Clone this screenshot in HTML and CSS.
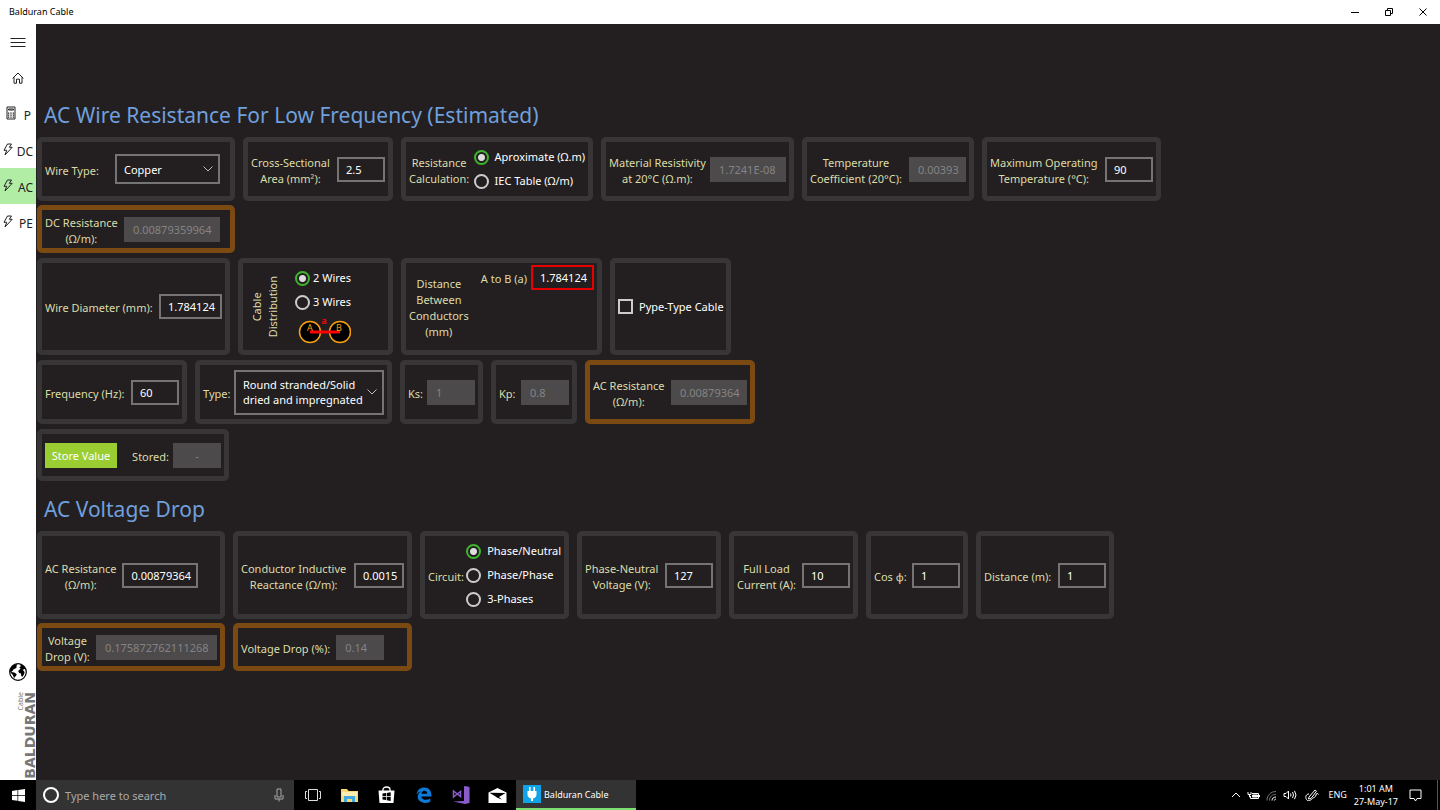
FILE: index.html
```html
<!DOCTYPE html>
<html lang="en">
  <head>
    <meta charset="UTF-8" />
    <meta name="viewport" content="width=device-width, initial-scale=1.0" />
    <title>Balduran Cable</title>
    <link rel="stylesheet" href="styles.css">
  </head>
  <body>
    <header class="titlebar">
      <span class="title">Balduran Cable</span>
      <div class="window-buttons">
        <button aria-label="Minimize"><svg width="10" height="10" viewBox="0 0 10 10"><path d="M1 5.5h8" /></svg></button>
        <button aria-label="Restore"><svg width="10" height="10" viewBox="0 0 10 10"><path d="M1.5 3.5h5v5h-5zM3.5 3.5v-2h5v5h-2" /></svg></button>
        <button aria-label="Close"><svg width="10" height="10" viewBox="0 0 10 10"><path d="M1.5 1.5l7 7M8.5 1.5l-7 7" /></svg></button>
      </div>
    </header>

    <div class="app">
      <nav class="sidebar">
        <button class="nav-item" aria-label="Menu"><svg width="16" height="10" viewBox="0 0 16 10"><path d="M.5 1.500h15M.5 5.500h15M.5 9.500h15" /></svg></button>
        <a class="nav-item" href="#" aria-label="Home"><svg width="12" height="12" viewBox="0 0 12 12"><path d="M.6 6.4L6 1l5.400 5.400M2 5.200v6h2.500V7.200h3v4H10v-6" /></svg></a>
        <a class="nav-item with-text first" href="#">
          <svg width="10" height="14" viewBox="0 0 10 14"><path d="M1 1h8v12H1zM2.500 3h5v1h-5z" /><path d="M2.600 6.500v5.500M5 6.500v5.500M7.400 6.500v5.500" stroke-dasharray="1.200 .8" stroke-width="1.300" /></svg>
          <span>P</span>
        </a>
        <a class="nav-item with-text" href="#">
          <svg width="10" height="13" viewBox="0 0 10 13"><path d="M4.500 1h4L6.300 4.300h2.900L2 12l1.700-4.700H1z" /></svg>
          <span>DC</span>
        </a>
        <a class="nav-item with-text active" href="#">
          <svg width="10" height="13" viewBox="0 0 10 13"><path d="M4.500 1h4L6.300 4.300h2.900L2 12l1.700-4.700H1z" /></svg>
          <span>AC</span>
        </a>
        <a class="nav-item with-text" href="#">
          <svg width="10" height="13" viewBox="0 0 10 13"><path d="M4.500 1h4L6.300 4.300h2.900L2 12l1.700-4.700H1z" /></svg>
          <span>PE</span>
        </a>
        <div class="sidebar-bottom">
          <svg class="globe" width="18" height="18" viewBox="0 0 18 18">
            <circle cx="9" cy="9" r="8.300" fill="#fff" stroke="#000" stroke-width="1.200" />
            <path d="M1.500 5.500C3 2.500 5 1.200 7.500.9l1 1.100-1.500.9 1 1-2 1.900-1.500.4-.6 1.500-1.500.2 1 1.300 1.800.2 2.500 1.600-.7 2-1.400 1-.3 1.700C5 15.500 4.500 13 3.500 11.500 2.500 10.500 1.300 9.500 1 8z" />
            <path d="M10.800.9c3 .6 5.300 2.600 6.200 5.600l-1.900-.4-1.200.9 1.700 1.900-.6 2.600-1.600 2.300-1.200-.7-.2-2.600-1.900-.6-.9-2 1.500-1.500 1-.8-1.500-1 1.600-1.400z" />
          </svg>
          <div class="logo">
            <span class="logo-small">Cable</span>
            <span class="logo-name">BALDURAN</span>
          </div>
        </div>
      </nav>

      <main>
        <h1>AC Wire Resistance For Low Frequency (Estimated)</h1>
        <div class="rows">
          <div class="row resistance-row">
            <div class="panel spread">
              <label for="wireType">Wire Type:</label>
              <div class="select-box">
                <select id="wireType">
                  <option>Copper</option>
                  <option>Aluminum</option>
                </select>
                <svg width="10" height="6" viewBox="0 0 10 6"><path d="M.5.5L5 5 9.500.5" /></svg>
              </div>
            </div>
            <div class="panel">
              <label for="area">Cross-Sectional<br />Area (mm²):</label>
              <input type="text" id="area" value="2.5" />
            </div>
            <fieldset class="panel">
              <div class="label" id="calcLabel">Resistance<br />Calculation:</div>
              <div class="radios" role="radiogroup" aria-labelledby="calcLabel">
                <label class="radio"><input type="radio" name="calc" checked />Aproximate (Ω.m)</label>
                <label class="radio"><input type="radio" name="calc" />IEC Table (Ω/m)</label>
              </div>
            </fieldset>
            <div class="panel">
              <label for="resistivity">Material Resistivity<br />at 20°C (Ω.m):</label>
              <input type="text" id="resistivity" class="medium" value="1.7241E-08" disabled />
            </div>
            <div class="panel">
              <label for="coefficient">Temperature<br />Coefficient (20°C):</label>
              <input type="text" id="coefficient" class="short" value="0.00393" disabled />
            </div>
            <div class="panel">
              <label for="maxTemp">Maximum Operating<br />Temperature (°C):</label>
              <input type="text" id="maxTemp" value="90" />
            </div>
            <div class="panel result spread">
              <label for="dcResistance">DC Resistance<br />(Ω/m):</label>
              <input type="text" id="dcResistance" class="long" value="0.00879359964" disabled />
            </div>
          </div>

          <div class="row wires-row">
            <div class="panel">
              <label for="diameter">Wire Diameter (mm):</label>
              <input type="text" id="diameter" class="number" value="1.784124" />
            </div>
            <fieldset class="panel distribution">
              <div class="label vertical" id="distLabel">Cable<br />Distribution</div>
              <div class="radios" role="radiogroup" aria-labelledby="distLabel">
                <label class="radio tight"><input type="radio" name="wires" checked />2 Wires</label>
                <label class="radio tight"><input type="radio" name="wires" />3 Wires</label>
                <svg class="diagram" width="56" height="33" viewBox="0 0 56 33">
                  <circle cx="15" cy="18" r="10.500" />
                  <circle cx="45" cy="18" r="10.500" />
                  <path d="M15 18h30" />
                  <text x="15" y="17" class="wire-name">A</text>
                  <text x="44" y="17" class="wire-name">B</text>
                  <text x="29" y="10" class="gap-name">a</text>
                </svg>
              </div>
            </fieldset>
            <div class="panel top">
              <div class="label">Distance<br />Between<br />Conductors<br />(mm)</div>
              <div class="pair">
                <label for="aToB">A to B (a)</label>
                <input type="text" id="aToB" class="number invalid" value="1.784124" />
              </div>
            </div>
            <div class="panel">
              <label class="check"><input type="checkbox" />Pype-Type Cable</label>
            </div>
          </div>

          <div class="row frequency-row">
            <div class="panel">
              <label for="frequency">Frequency (Hz):</label>
              <input type="text" id="frequency" value="60" />
            </div>
            <div class="panel">
              <label for="cableType">Type:</label>
              <div class="select-box cable-type">
                <select id="cableType">
                  <option>Round stranded/Solid dried and impregnated</option>
                </select>
                <svg width="10" height="6" viewBox="0 0 10 6"><path d="M.5.5L5 5 9.500.5" /></svg>
              </div>
            </div>
            <div class="panel">
              <label for="ks">Ks:</label>
              <input type="text" id="ks" value="1" disabled />
            </div>
            <div class="panel">
              <label for="kp">Kp:</label>
              <input type="text" id="kp" value="0.8" disabled />
            </div>
            <div class="panel result">
              <label for="acResult">AC Resistance<br />(Ω/m):</label>
              <input type="text" id="acResult" class="medium" value="0.00879364" disabled />
            </div>
          </div>

          <div class="row store-row">
            <div class="panel">
              <button class="store">Store Value</button>
              <div class="pair">
                <label for="stored">Stored:</label>
                <input type="text" id="stored" class="center" value="-" disabled />
              </div>
            </div>
          </div>
        </div>

        <h1>AC Voltage Drop</h1>
        <div class="rows">
          <div class="row drop-row">
            <div class="panel start">
              <label for="acResistance">AC Resistance<br />(Ω/m):</label>
              <input type="text" id="acResistance" class="medium" value="0.00879364" />
            </div>
            <div class="panel">
              <label for="reactance">Conductor Inductive<br />Reactance (Ω/m):</label>
              <input type="text" id="reactance" class="reactance" value="0.0015" />
            </div>
            <fieldset class="panel">
              <div class="label" id="circuitLabel">Circuit:</div>
              <div class="radios" role="radiogroup" aria-labelledby="circuitLabel">
                <label class="radio"><input type="radio" name="circuit" checked />Phase/Neutral</label>
                <label class="radio"><input type="radio" name="circuit" />Phase/Phase</label>
                <label class="radio"><input type="radio" name="circuit" />3-Phases</label>
              </div>
            </fieldset>
            <div class="panel">
              <label for="voltage">Phase-Neutral<br />Voltage (V):</label>
              <input type="text" id="voltage" value="127" />
            </div>
            <div class="panel">
              <label for="current">Full Load<br />Current (A):</label>
              <input type="text" id="current" value="10" />
            </div>
            <div class="panel">
              <label for="cos">Cos ϕ:</label>
              <input type="text" id="cos" value="1" />
            </div>
            <div class="panel">
              <label for="distance">Distance (m):</label>
              <input type="text" id="distance" value="1" />
            </div>
            <div class="panel result">
              <label for="dropV">Voltage<br />Drop (V):</label>
              <input type="text" id="dropV" class="longest" value="0.175872762111268" disabled />
            </div>
            <div class="panel result start">
              <label for="dropPercent">Voltage Drop (%):</label>
              <input type="text" id="dropPercent" value="0.14" disabled />
            </div>
          </div>
        </div>
      </main>
    </div>

    <footer class="taskbar">
      <button class="start-button" aria-label="Start"><svg width="13" height="13" viewBox="0 0 13 13"><path fill="#fff" d="M0 1.900l5.500-.8v5H0zM6.200 1L13 0v6.100H6.200zM0 6.800h5.500v5L0 11.100zM6.200 6.800H13V13l-6.800-1z" /></svg></button>
      <div class="search">
        <svg width="18" height="18" viewBox="0 0 18 18"><circle cx="9" cy="9" r="7" fill="none" stroke="#fff" stroke-width="2" /></svg>
        <input type="text" aria-label="Search" placeholder="Type here to search" />
        <svg width="10" height="14" viewBox="0 0 10 14"><path d="M3 1h4v8H3zM1 7v4h8V7M5 11v2.500" fill="none" stroke="#aaa" /></svg>
      </div>
      <button class="task" aria-label="Task View"><svg width="16" height="12" viewBox="0 0 16 12"><path d="M3.500.5h9v11h-9zM2 2.500H.5v7H2M14 2.500h1.500v7H14" fill="none" stroke="#ddd" /></svg></button>
      <button class="task" aria-label="File Explorer"><svg width="17" height="15" viewBox="0 0 17 15"><path fill="#f8d775" d="M0 1h6l1.500 2H17v11H0z" /><path fill="#fdeeb0" d="M1 4h15v4H1z" /><path fill="#3fa9e0" d="M3 8h11v6h-3v-3H6v3H3z" /></svg></button>
      <button class="task" aria-label="Store"><svg width="17" height="18" viewBox="0 0 17 18"><path d="M5 5V3.500C5 2 6.500 1 8.500 1S12 2 12 3.500V5" fill="none" stroke="#fff" stroke-width="1.300" /><path fill="#fff" d="M.5 4.500h16L15.500 17h-14z" /><path fill="#000" d="M4.500 7.500L8 7v3.200H4.500zM8.700 6.900l4-.6v3.900h-4zM4.500 10.900H8V14l-3.500-.5zM8.700 10.900h4V15l-4-.7z" /></svg></button>
      <button class="task" aria-label="Edge"><svg width="16" height="16" viewBox="0 0 16 16"><path fill="#0c7ad8" d="M.5 7.500C1.300 3 4.200.5 8.200.5c4.600 0 7.200 3.200 7.200 7.200v1.800H5.300c.3 2.500 2.300 3.300 4.500 3.300 1.700 0 3.100-.4 4.500-1.200v3.100c-1.400.8-3.200 1.200-5.100 1.200-4.300 0-7.500-2.400-7.500-6.300 0-2.300 1.400-4.300 3.600-5.400C3 4.800 1.500 5.800.5 7.500zM5.400 6.800h5.800c0-1.900-1-3.100-2.800-3.100-1.700 0-2.700 1.300-3 3.100z" /></svg></button>
      <button class="task" aria-label="Visual Studio"><svg width="18" height="18" viewBox="0 0 18 18"><path fill="#8a5cc9" d="M12 .5l1-.5 4.500 1v16L13 18 1 15.500l11-.5z" /><path d="M1.500 5v6l7-5.500v5z" fill="none" stroke="#8a5cc9" stroke-width="1.500" /></svg></button>
      <button class="task" aria-label="Mail"><svg width="19" height="15" viewBox="0 0 19 15"><path fill="#fff" d="M.5 4.500L9.500 0l9 4.500V15H.5z" /><path fill="#000" d="M1.500 4.800l16 .2-6.500 4 3 2.800-5-2.300z" /></svg></button>
      <button class="task-app">
        <svg width="18" height="18" viewBox="0 0 18 18"><path fill="#10a5e8" d="M0 0h18v18H0z" /><path fill="#fff" d="M6 2h1.600v4h2.800V2H12v4h1.500v3.500c0 2-1.300 3.500-3.500 4V16H8v-2.500c-2.200-.5-3.500-2-3.500-4V6H6z" /></svg>
        Balduran Cable
      </button>
      <div class="tray">
        <svg width="10" height="6" viewBox="0 0 10 6"><path d="M1 5l4-4 4 4" /></svg>
        <svg width="13" height="9" viewBox="0 0 13 9"><path d="M5 2.500h6.500v5h-8V5M12.500 4v2M1 1v2.500h3V1M2.500 3.500V6h1" /><path d="M5.500 4h5v2h-5z" class="charge" /></svg>
        <svg width="11" height="11" viewBox="0 0 11 11"><path class="dim" d="M1 10.500C1 5 5 1.500 10 1.500M3.500 10.500C3.500 7 6 4.300 10 4.300" /><path d="M6 10.500c0-2 1.500-3.500 4-3.500M8.300 10.500c0-.8.700-1.300 1.700-1.300" /></svg>
        <svg width="14" height="10" viewBox="0 0 14 10"><path d="M1 3.500h2l2.500-2.500v8L3 6.500H1zM7.500 3.500q1 1.500 0 3M9.500 2q2 3 0 6M11.500.8q3 4.200 0 8.400" /></svg>
        <svg class="pen" width="14" height="12" viewBox="0 0 14 12"><path d="M4 8l6-7 1.500 1.200L6 9.500 3.500 10zM4 5C1 5 0 8 1.500 10.500S6 11 7.500 9.500 11 8 11 6s2-2 2.500-.5" /></svg>
        <span class="lang">ENG</span>
        <div class="clock">1:01 AM<br />27-May-17</div>
        <svg width="13" height="13" viewBox="0 0 13 13"><path d="M1 1h11v8.500H8L6.500 12 5 9.500H1z" /></svg>
        <span class="show-desktop"></span>
      </div>
    </footer>
  </body>
</html>
```

FILE: styles.css
```css
* {
  margin: 0;
  padding: 0;
  box-sizing: border-box;
  font-family: "Noto Sans", "Open Sans", sans-serif;
}

body {
  display: flex;
  flex-direction: column;
  height: 100vh;
  overflow: hidden;
  background: #231f20;
  font-size: 11px;
  line-height: 16px;
}

button {
  border: none;
  background: none;
}

svg {
  flex: none;
}

/* Window title bar */
.titlebar {
  display: flex;
  justify-content: space-between;
  align-items: center;
  height: 24px;
  padding-left: 9px;
  background: #fff;
}

.title {
  font-size: 9px;
}

.window-buttons {
  display: flex;
}

.window-buttons button {
  display: flex;
  justify-content: center;
  align-items: center;
  width: 34px;
  height: 24px;
}

.window-buttons path {
  fill: none;
  stroke: #000;
}

.app {
  display: flex;
  flex: 1;
  min-height: 0;
}

/* Sidebar */
.sidebar {
  display: flex;
  flex-direction: column;
  width: 36px;
  background: #fff;
}

.nav-item {
  display: flex;
  justify-content: center;
  align-items: center;
  height: 36px;
  color: #222;
  font-size: 12px;
  text-decoration: none;
}

.nav-item svg {
  fill: none;
  stroke: #222;
}

.nav-item.with-text {
  justify-content: space-between;
  padding: 0 3px;
}

.nav-item.with-text svg {
  margin-bottom: 2px;
}

.nav-item.with-text span {
  padding-top: 3px;
}

.nav-item.first {
  padding: 0 5px 0 6px;
}

.nav-item.active {
  background: #b2eda6;
}

.sidebar-bottom {
  display: flex;
  flex-direction: column;
  align-items: center;
  gap: 11px;
  margin-top: auto;
}

.logo {
  display: flex;
  align-self: flex-end;
  padding: 0 1px 1px 0;
  color: #777;
}

.logo span {
  writing-mode: vertical-rl;
  transform: rotate(180deg);
}

.logo-small {
  align-self: flex-start;
  font-size: 7px;
  line-height: 8px;
}

.logo-name {
  font-family: "DejaVu Sans", sans-serif;
  font-size: 14px;
  font-weight: bold;
  line-height: 10px;
}

/* Main form */
main {
  flex: 1;
  padding: 75px 0 0 1px;
}

h1 {
  margin-bottom: 6px;
  padding-left: 7px;
  color: #6f9fdc;
  font-size: 21px;
  font-weight: 400;
  line-height: 32px;
}

.rows {
  display: flex;
  flex-direction: column;
  gap: 5px;
  margin-bottom: 12px;
}

.row {
  display: grid;
  gap: 4px 8px;
}

.resistance-row {
  grid-template-columns: 198px 150px 192px 193px 172px 179px;
  grid-template-rows: 64px 48px;
}

.wires-row {
  grid-template-columns: 193px 155px 201px 121px;
  grid-template-rows: 97px;
}

.frequency-row {
  grid-template-columns: 150px 197px 83px 86px 170px;
  grid-template-rows: 64px;
}

.store-row {
  grid-template-columns: 192px;
  grid-template-rows: 52px;
}

.drop-row {
  grid-template-columns: 188px 179px 149px 144px 129px 102px 138px;
  grid-template-rows: 88px 48px;
}

.panel {
  display: flex;
  justify-content: space-between;
  align-items: center;
  min-width: 0;
  padding: 0 3px;
  border: 5px solid #383536;
  border-radius: 5px;
}

.panel.result {
  border-color: #7b4a12;
}

.panel.spread {
  padding-right: 10px;
}

.panel.start {
  justify-content: flex-start;
  gap: 6px;
}

.panel label,
.label {
  padding-top: 3px;
  color: #dcdcaa;
  text-align: center;
  white-space: nowrap;
}

.pair {
  display: flex;
  align-items: center;
  gap: 4px;
}

.panel.top .pair {
  align-self: flex-start;
  padding-top: 2px;
}

input[type="text"] {
  width: 48px;
  height: 25px;
  padding-left: 7px;
  border: 2px solid #757374;
  background: transparent;
  color: #fff;
  font-size: 11px;
}

input[type="text"].reactance {
  width: 50px;
}

input[type="text"].short {
  width: 57px;
}

input[type="text"].number {
  width: 63px;
}

input[type="text"].medium {
  width: 76px;
}

input[type="text"].long {
  width: 96px;
}

input[type="text"].longest {
  width: 121px;
}

input[type="text"].center {
  padding: 0;
  text-align: center;
}

input[type="text"].invalid {
  border-color: #e80000;
}

input[type="text"]:disabled {
  border-color: #4c4a4b;
  background: #4c4a4b;
  color: #858384;
}

/* Drop-downs */
.select-box {
  position: relative;
}

.select-box select {
  appearance: none;
  width: 105px;
  height: 30px;
  padding-left: 7px;
  border: 2px solid #757374;
  border-radius: 0;
  background: transparent;
  color: #fff;
  font-size: 11px;
  line-height: 15px;
}

.select-box svg {
  position: absolute;
  top: 50%;
  right: 7px;
  margin-top: -3px;
  fill: none;
  stroke: #bbb;
  pointer-events: none;
}

/* This one wraps its value on two lines */
.cable-type select {
  display: block;
  appearance: base-select;
  width: 150px;
  height: 45px;
  min-height: 0;
  padding: 5px 16px 0 7px;
  white-space: normal;
  text-align: left;
}

.cable-type select::picker-icon {
  display: none;
}

/* Radios and tick box */
.radios {
  display: flex;
  flex-direction: column;
}

.panel .radio,
.panel .check {
  display: flex;
  align-items: center;
  gap: 6px;
  height: 24px;
  padding: 0;
  color: #fff;
}

.panel .radio.tight {
  gap: 3px;
}

input[type="radio"],
input[type="checkbox"] {
  appearance: none;
  flex: none;
  width: 15px;
  height: 15px;
  border: 2px solid #ccc;
}

input[type="radio"] {
  border-radius: 50%;
}

input[type="radio"]:checked {
  border-color: #3db52c;
  background: radial-gradient(circle, #ddd 3px, transparent 4px);
}

.panel.distribution {
  justify-content: flex-start;
  gap: 14px;
  padding-left: 6px;
}

.label.vertical {
  padding: 0;
  writing-mode: vertical-rl;
  transform: rotate(180deg);
}

.diagram circle {
  fill: #000;
  stroke: #f7a010;
  stroke-width: 1.5;
}

.diagram path {
  stroke: #f00;
  stroke-width: 3;
}

.diagram text {
  text-anchor: middle;
  font-size: 9px;
}

.wire-name {
  fill: #f7a010;
}

.gap-name {
  fill: #f00;
  font-weight: bold;
}

.store {
  width: 72px;
  height: 25px;
  background: #9acd32;
  color: #fff;
  font-size: 11px;
}

/* Taskbar */
.taskbar {
  display: flex;
  height: 30px;
  background: #000;
  color: #fff;
}

.taskbar button {
  display: flex;
  justify-content: center;
  align-items: center;
}

.start-button {
  width: 36px;
}

.search {
  display: flex;
  align-items: center;
  gap: 5px;
  width: 258px;
  padding: 0 10px 0 6px;
  background: #333;
}

.search input[type="text"] {
  flex: 1;
  min-width: 0;
  padding: 0;
  border: none;
}

.search input::placeholder {
  color: #aaa;
}

.task {
  width: 37px;
}

.taskbar .task-app {
  justify-content: flex-start;
  gap: 3px;
  width: 120px;
  padding-left: 7px;
  border-bottom: 2px solid #7ae070;
  background: #333;
  color: #fff;
  font-size: 9px;
}

.tray {
  display: flex;
  align-items: center;
  gap: 6px;
  margin-left: auto;
}

.tray path {
  fill: none;
  stroke: #fff;
}

.tray .charge {
  fill: #fff;
}

.tray .dim {
  stroke: #777;
}

.tray .pen {
  margin-left: 2px;
}

.lang {
  padding: 0 1px 0 3px;
  font-size: 9px;
}

.clock {
  font-size: 9px;
  line-height: 13px;
  text-align: center;
}

.tray .clock + svg {
  margin: 0 9px 0 5px;
}

.show-desktop {
  width: 3px;
  height: 30px;
  border-left: 1px solid #555;
}
```
